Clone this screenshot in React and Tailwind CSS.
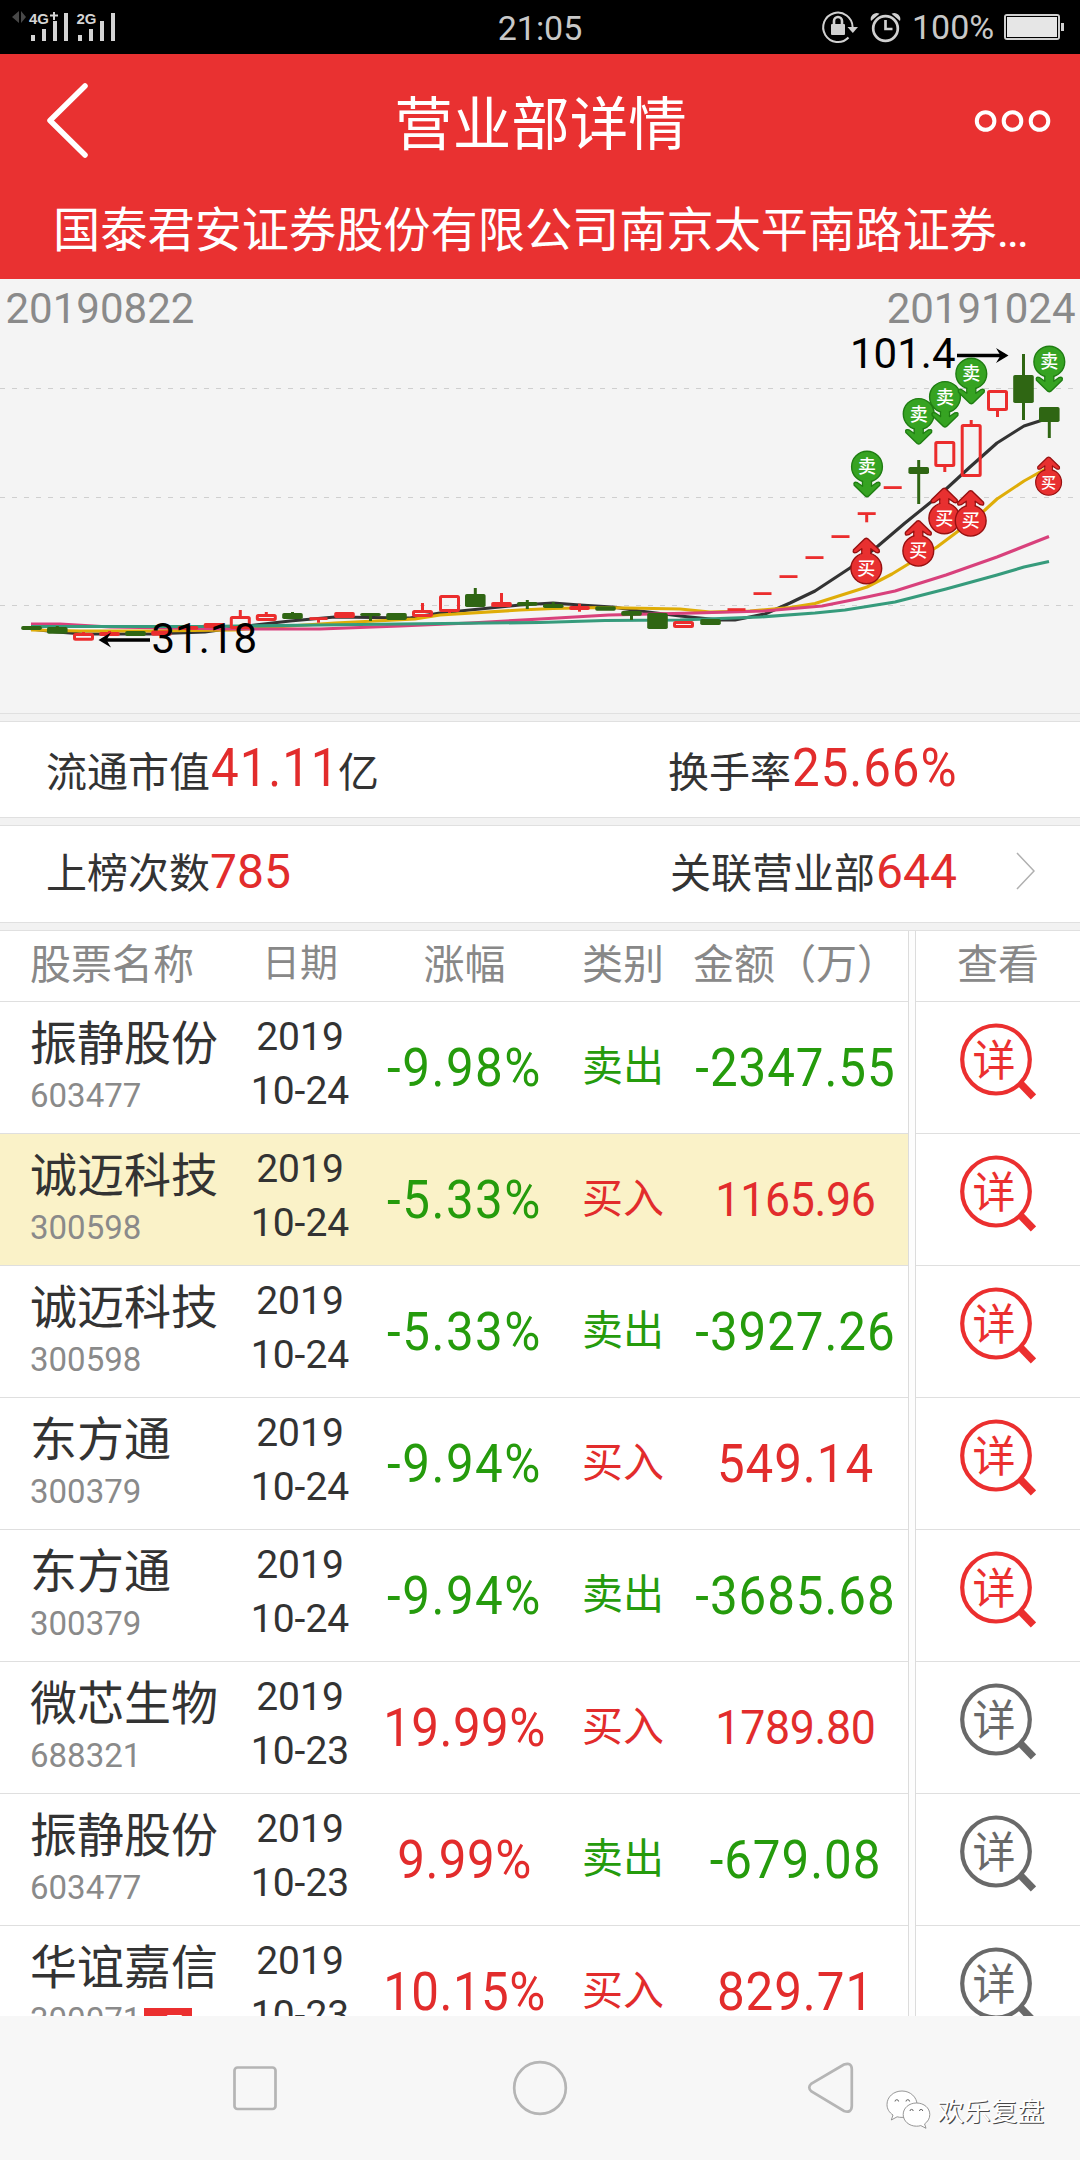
import clsx from 'clsx'

const RED = '#eb2d2d'
const GREEN = '#2f6613'

// [x, type, bodyTop, bodyBottom, wickTop, wickBottom]
const candles = [
  [31.5, 'down', 626, 630], [57.3, 'down', 627, 633.7, 626], [83.5, 'up', 633, 640.7, 632],
  [109.5, 'flat', 632, 636, 631], [135.5, 'down', 631, 636], [161.5, 'flat', 630.5, 635.7],
  [188, 'flat', 626, 629.7], [214, 'flat', 623, 628], [240.3, 'up', 616, 629, 610],
  [266.3, 'up', 614, 621, 612], [292.5, 'down', 613, 619, 612], [318.5, 'line', 617.2, 620, null, 622.7],
  [344.5, 'flat', 612, 618], [370.5, 'down', 613, 616, null, 621], [396.5, 'down', 613, 620],
  [422.5, 'up', 610, 617, 603], [449.5, 'up', 595, 612, null, 613], [475.3, 'down', 594, 607, 588],
  [501.5, 'flat', 602, 607, 593], [527.3, 'down', 602, 605.7, 600, 609], [553.3, 'down', 604, 608, 602],
  [579.5, 'flat', 606, 610, 603.7, 611.7], [605.5, 'down', 606.2, 610.7], [631.5, 'down', 611, 615.7, null, 620],
  [657.5, 'down', 613, 629], [683.5, 'up', 621, 628], [710.5, 'down', 619, 625],
  [736.5, 'line', 608.2, 611], [762.5, 'line', 592.2, 595], [788.5, 'line', 575.2, 578],
  [814.5, 'line', 556.2, 559], [840.5, 'line', 535.2, 538], [866.7, 'line', 512.2, 515, null, 522.3],
  [892.7, 'line', 486.2, 489], [918.7, 'down', 467, 474, 460, 504], [944.8, 'up', 441, 467, null, 472],
  [971.2, 'up', 424, 477, 420], [997.5, 'up', 390, 411, null, 417], [1023.5, 'down', 375, 403, 354, 420],
  [1049.3, 'down', 407, 422, null, 438],
]

const averages = [
  { color: '#333', points: '31,629 57,632 83,634 150,634 205,632 255,625 290,621 335,617 410,618 440,613 470,610 520,605 553,603 580,605 612,607 640,611 680,616 720,620 735,620 765,614 790,603 815,591 850,568 878,546 905,523 931,502 945,490 970,467 997,443 1024,426 1049,418' },
  { color: '#dfad08', points: '31,630 80,631 150,631 235,630 260,628 335,623 415,619 440,615 520,610 553,608.5 600,607.5 680,609 710,612 750,611 790,607.5 815,603.5 867,587 892,574 910,563 937,547 957,532 985,510 997,499 1024,481 1049,467' },
  { color: '#d8417c', points: '31,624 60,624 110,627 230,629 320,629 400,626 470,623 540,619 609,615 695,613 764,611 822,606 867,597 895,591 946,575 997,557 1049,536.5' },
  { color: '#369b7c', points: '31,626.5 200,626.5 320,625 400,624 540,622.5 605,620.5 680,620 760,617 815,613 845,610 895,602 946,589 997,575 1024,567 1049,561.5' },
]

const sells = [[867, 466.7], [918.7, 414], [945, 397], [971.3, 373.7], [1049.3, 361.7]]
const buys = [[866.3, 568.3], [918.3, 550.7], [944.3, 518.3], [970.7, 520.7], [1048.6, 482.3, 0.84]]

const rows = [
  { name: '振静股份', code: '603477', day: '10-24', pct: '-9.98%', type: '卖出', amount: '-2347.55', hot: true },
  { name: '诚迈科技', code: '300598', day: '10-24', pct: '-5.33%', type: '买入', amount: '1165.96', hot: true, active: true },
  { name: '诚迈科技', code: '300598', day: '10-24', pct: '-5.33%', type: '卖出', amount: '-3927.26', hot: true },
  { name: '东方通', code: '300379', day: '10-24', pct: '-9.94%', type: '买入', amount: '549.14', hot: true },
  { name: '东方通', code: '300379', day: '10-24', pct: '-9.94%', type: '卖出', amount: '-3685.68', hot: true },
  { name: '微芯生物', code: '688321', day: '10-23', pct: '19.99%', type: '买入', amount: '1789.80' },
  { name: '振静股份', code: '603477', day: '10-23', pct: '9.99%', type: '卖出', amount: '-679.08' },
  { name: '华谊嘉信', code: '300071', day: '10-23', pct: '10.15%', type: '买入', amount: '829.71', tag: '3日' },
]

function StatusBar() {
  return (
    <div className="h-[54px] bg-black flex items-center justify-between pl-3 pr-4 relative text-[#c8c8c8]">
      <svg className="w-[110px] h-[54px]" viewBox="12 0 110 54" fill="#d4d4d4">
        <path d="M19 11v12l-7-6zM21 11v12l5-6z" fill="#484848" />
        <text x="29" y="24" fontSize="15" fontWeight="bold" fontFamily="Liberation Sans, sans-serif">4G</text>
        <path d="M50 15.5h8M54 12v8" stroke="#d4d4d4" strokeWidth="2" />
        <text x="76.5" y="24" fontSize="15" fontWeight="bold" fontFamily="Liberation Sans, sans-serif">2G</text>
        <path d="M31 35h4v6h-4zM42 29h4v12h-4zM53 21h4v20h-4zM64 13h4v28h-4zM78 35h4v6h-4zM89 29h4v12h-4zM100 21h4v20h-4zM111 13h4v28h-4z" />
      </svg>
      <span className="absolute left-1/2 top-2 -translate-x-1/2 text-[34px] leading-10">21:05</span>
      <div className="flex items-center">
        <svg className="w-[84px] h-[54px]" viewBox="819 0 84 54" fill="none" stroke="#d0d0d0">
          <path d="M848.5 37.5A14.7 14.7 0 1 1 852.6 27" strokeWidth="2" />
          <path d="M847.5 27h10.5l-5.2 6z" fill="#d0d0d0" stroke="none" />
          <rect x="831" y="24" width="14" height="11" rx="1" fill="#d0d0d0" stroke="none" />
          <path d="M834 25v-4a4 4 0 0 1 8 0v4" strokeWidth="2.6" />
          <circle cx="885.5" cy="28.5" r="12.3" strokeWidth="2.7" />
          <path d="M885.5 20v9h7" strokeWidth="2.7" />
          <path d="M871 21a6 6 0 0 1 8.5-7.2zM900 21a6 6 0 0 0-8.5-7.2z" fill="#d0d0d0" stroke="none" />
        </svg>
        <span className="text-[34px] leading-10 ml-[9px] w-[91px] -mt-px">100%</span>
        <svg className="w-[61px] h-7" viewBox="0 0 61 28">
          <rect x="2" y="2" width="54" height="24" rx="2" fill="#e6e6e6" stroke="#d0d0d0" strokeWidth="2" />
          <rect x="3.5" y="3.5" width="51" height="21" fill="none" stroke="#000" />
          <rect x="58" y="10" width="3" height="8" fill="#d0d0d0" />
        </svg>
      </div>
    </div>
  )
}

function Header() {
  return (
    <header className="h-[225px] bg-[#e93131] text-white flex flex-col">
      <div className="h-[134px] flex items-center justify-between pl-[44px] pr-[28px]">
        <svg className="w-12 h-20" viewBox="44 82 48 80" fill="none" stroke="white" strokeWidth="5.5" strokeLinecap="round" strokeLinejoin="round">
          <path d="M85 87 50 121.5 85 156" />
        </svg>
        <h1 className="text-[58.5px] leading-none ml-[17px] mt-[9px]">营业部详情</h1>
        <svg className="w-[80px] h-6" viewBox="0 0 80 24" fill="none" stroke="white" strokeWidth="4">
          <circle cx="13.6" cy="12" r="8.8" />
          <circle cx="40.5" cy="12" r="8.8" />
          <circle cx="67.5" cy="12" r="8.8" />
        </svg>
      </div>
      <p className="text-[47.2px] leading-[86px] pl-[53px] whitespace-nowrap">
        国泰君安证券股份有限公司南京太平南路证券<span className="tracking-[-2.5px]">...</span>
      </p>
    </header>
  )
}

function Candle({ data }) {
  const [x, type, top, bottom, wickTop, wickBottom] = data
  const color = type === 'down' ? GREEN : RED
  const hollow = type === 'up'
  const half = type === 'line' ? 9 : 10.3
  return (
    <g stroke={color} strokeWidth="3">
      {wickTop && <path d={`M${x} ${wickTop}V${top + 1}`} />}
      {wickBottom && <path d={`M${x} ${bottom - 1}V${wickBottom}`} />}
      {hollow ? (
        <rect x={x - 9} y={top + 1.4} width="18" height={bottom - top - 2.8} rx="1" fill="none" />
      ) : (
        <rect x={x - half} y={top} width={half * 2} height={bottom - top} rx={type === 'line' ? 0 : 1.8} fill={color} stroke="none" />
      )}
    </g>
  )
}

function Marker({ x, y, scale = 1, buy }) {
  const arrow = 'M-4.5 13H4.5V19.5L9.5 16Q14 14.5 12.8 18.5L1.5 29.5Q0 30.5-1.5 29.5L-12.8 18.5Q-14 14.5-9.5 16L-4.5 19.5Z'
  return (
    <g transform={`translate(${x} ${y}) scale(${scale})`}>
      <g fill={buy ? '#e83030' : '#36a322'} stroke={buy ? '#961010' : '#1f7d12'} strokeWidth="1.4" strokeLinejoin="round">
        <path d={arrow} transform={buy ? 'scale(1 -1)' : undefined} />
        <circle r="15.4" />
        <rect x="-3.8" y={buy ? -18 : 12} width="7.6" height="6" stroke="none" />
      </g>
      <text y="6.5" textAnchor="middle" fontSize="18" fontWeight="500" fill="white">{buy ? '买' : '卖'}</text>
    </g>
  )
}

function Chart() {
  return (
    <svg className="block w-full h-[434px] bg-[#f4f4f4]" viewBox="0 279 1080 434">
      <g stroke="#cfcfcf" strokeWidth="1.2" strokeDasharray="5 7">
        <path d="M0 388.5H1080M0 497.5H1080M0 605.5H1080" />
      </g>
      {averages.map((a) => (
        <polyline key={a.color} points={a.points} fill="none" stroke={a.color} strokeWidth="3.1" strokeLinejoin="round" />
      ))}
      {candles.map((c) => <Candle key={c[0]} data={c} />)}
      <g fontSize="42" fill="#8a8a8a">
        <text x="5.5" y="322.5">20190822</text>
        <text x="1075.5" y="322.5" textAnchor="end">20191024</text>
      </g>
      <g fontSize="42" fill="black">
        <text x="151.5" y="652.5">31.18</text>
        <text x="850" y="367.5">101.4</text>
      </g>
      <g fill="none" stroke="black" strokeWidth="3.4">
        <path d="M150 640H102M957 355.5H1005" />
        <path d="M98.5 640L111 632.5 106.5 640 111 647.5ZM1008.5 355.5L996 348 1000.5 355.5 996 363Z" fill="black" stroke="none" />
      </g>
      {sells.map(([x, y]) => <Marker key={x} x={x} y={y} />)}
      {buys.map(([x, y, s]) => <Marker key={x} x={x} y={y} scale={s} buy />)}
    </svg>
  )
}

function Divider() {
  return <div className="h-[9px] bg-[#f2f2f2] border-y border-[#e0e0e0]" />
}

function Stats() {
  return (
    <section className="text-[#333] text-[41px] leading-[60px] whitespace-nowrap">
      <Divider />
      <div className="h-[95px] bg-white flex items-center pl-[46px] pt-[6px]">
        <div className="flex w-[622px]">
          <span>流通市值</span>
          <span className="w-[128px] text-[53px] text-[#e22c2c] origin-left scale-x-93 relative left-px -top-[5px] tracking-[1px]">41.11</span>
          <span>亿</span>
        </div>
        <span>换手率</span>
        <span className="text-[53px] text-[#e22c2c] origin-left scale-x-93 relative left-px -top-[5px] tracking-[1px]">25.66%</span>
      </div>
      <Divider />
      <div className="h-[96px] bg-white flex items-center pl-[46px]">
        <div className="flex w-[624px]">
          <span>上榜次数</span>
          <span className="text-[48px] text-[#e22c2c] relative -top-[2px]">785</span>
        </div>
        <span>关联营业部</span>
        <span className="text-[48px] text-[#e22c2c] relative left-px -top-[2px]">644</span>
        <svg className="w-5 h-10 ml-auto mr-[45px] -mt-[7px]" viewBox="0 0 20 40" fill="none" stroke="#b0b0b0" strokeWidth="1.5">
          <path d="M2 2 19 20 2 38" />
        </svg>
      </div>
      <Divider />
    </section>
  )
}

function DetailIcon({ hot }) {
  const color = hot ? '#eb2f2f' : '#696969'
  return (
    <svg className="w-20 h-20" viewBox="0 0 80 80">
      <ellipse cx="40" cy="39.5" rx="33.8" ry="34" fill="none" stroke={color} strokeWidth="4.2" />
      <path d="M64.5 63.500 77.500 77" stroke={color} strokeWidth="7.5" />
      <text x="38" y="56" textAnchor="middle" fontSize="43" fill={color}>详</text>
    </svg>
  )
}

const COLS = 'grid grid-cols-[30px_206px_128px_201px_116px_1fr]'

function Row({ row }) {
  const small = row.amount.length === 7 && row.type === '买入'
  return (
    <div className="h-[132px] shrink-0 flex border-b border-[#dfdfdf]">
      <div className={clsx(COLS, 'w-[908px] items-center text-center whitespace-nowrap pt-[2px]', row.active ? 'bg-[#faf2c8]' : 'bg-white')}>
        <div />
        <div className="text-left -mt-[5px]">
          <div className="text-[47px] leading-[60px] text-[#333]">{row.name}</div>
          <div className="flex text-[33px] leading-[44px] text-[#8a8a8a]">
            {row.code}
            {row.tag && <span className="bg-[#eb2f2f] text-white text-[22px] leading-[34px] h-8 w-12 text-center mt-[10px] ml-[3px]">{row.tag}</span>}
          </div>
        </div>
        <div className="text-[39px] leading-[54px] text-[#333] -mt-[9px]">
          <div>2019</div>
          <div>{row.day}</div>
        </div>
        <div className={clsx('text-[53px] leading-none scale-x-93', row.pct[0] === '-' ? 'text-[#259b0c] tracking-[1.6px]' : 'text-[#e22c2c] tracking-[0.5px]')}>{row.pct}</div>
        <div className={clsx('text-[41px] leading-none -mt-[2px]', row.type === '卖出' ? 'text-[#259b0c]' : 'text-[#e22c2c]')}>{row.type}</div>
        <div className={clsx('leading-none scale-x-93 relative left-px', small ? 'text-[48px] tracking-[-0.3px] -mt-[2px]' : 'text-[53px] tracking-[1px]', row.type === '卖出' ? 'text-[#259b0c]' : 'text-[#e22c2c]')}>
          {row.amount}
        </div>
      </div>
      <Gutter />
      <div className="flex-1 bg-white pl-[40px] pt-[18px]">
        <DetailIcon hot={row.hot} />
      </div>
    </div>
  )
}

// the double vertical rule runs through the row borders
function Gutter() {
  return <div className="w-[8px] -mb-px bg-[#fdfdfd] border-x border-[#dcdcdc]" />
}

function Table() {
  return (
    <section className="flex-1 min-h-0 overflow-hidden flex flex-col">
      <div className="h-[71px] shrink-0 flex border-b border-[#dfdfdf] text-[41px] text-[#888] whitespace-nowrap">
        <div className={clsx(COLS, 'w-[908px] items-center text-center bg-white')}>
          <div />
          <div className="text-left">股票名称</div>
          <div className="text-[38px] -mt-[6px]">日期</div>
          <div>涨幅</div>
          <div>类别</div>
          <div className="text-left pl-3">金额（万）</div>
        </div>
        <Gutter />
        <div className="flex-1 bg-white flex items-center pl-[41px]">查看</div>
      </div>
      {rows.map((row, i) => <Row key={i} row={row} />)}
    </section>
  )
}

function NavBar() {
  return (
    <nav className="h-[144px] bg-[#f7f7f7]">
      <svg className="block w-full h-full" viewBox="0 2016 1080 144" fill="none" stroke="#b5b5b5" strokeWidth="2.7">
        <rect x="234.5" y="2067.5" width="41" height="41.5" rx="3" />
        <circle cx="540" cy="2088" r="25.8" />
        <path d="M844 2064.5 811.5 2083.5Q807 2087.5 811.5 2091.5L844 2111Q851.5 2113.5 851.8 2106V2069Q851.5 2062 844 2064.5Z" />
        <g fill="white" stroke="#8a8a8a" strokeWidth="0.9">
          <path d="M902 2091c-8.5 0-15 6-15 13.5 0 4.5 2.3 8 6 10.5l-1.7 5 5.8-3.2c1.6.4 3.2.6 4.9.6 8.5 0 15-5.8 15-12.9S910.5 2091 902 2091z" />
          <path d="M916.5 2103c-7.5 0-13.3 5-13.3 11.5s5.8 11.7 13.3 11.7c1.5 0 3-.2 4.3-.6l5.2 2.7-1.4-4.4c3.2-2.2 5.2-5.5 5.2-9.4 0-6.5-5.8-11.5-13.3-11.5z" />
          <path d="M895 2101.5a1.8 1.8 0 0 1 3.6 0M906 2101.5a1.8 1.8 0 0 1 3.6 0M910 2111a1.6 1.6 0 0 1 3.2 0M919.5 2111a1.6 1.6 0 0 1 3.2 0" stroke="#555" />
        </g>
        <g fontSize="26.7" stroke="none">
          <text x="938.4" y="2122.4" fill="#484848">欢乐复盘</text>
          <text x="937.3" y="2121.3" fill="white">欢乐复盘</text>
        </g>
      </svg>
    </nav>
  )
}

export default function App() {
  return (
    <div className="w-[1080px] h-[2160px] overflow-hidden flex flex-col bg-white font-[Roboto,'Noto_Sans_CJK_SC',sans-serif]">
      <StatusBar />
      <Header />
      <Chart />
      <Stats />
      <Table />
      <NavBar />
    </div>
  )
}
